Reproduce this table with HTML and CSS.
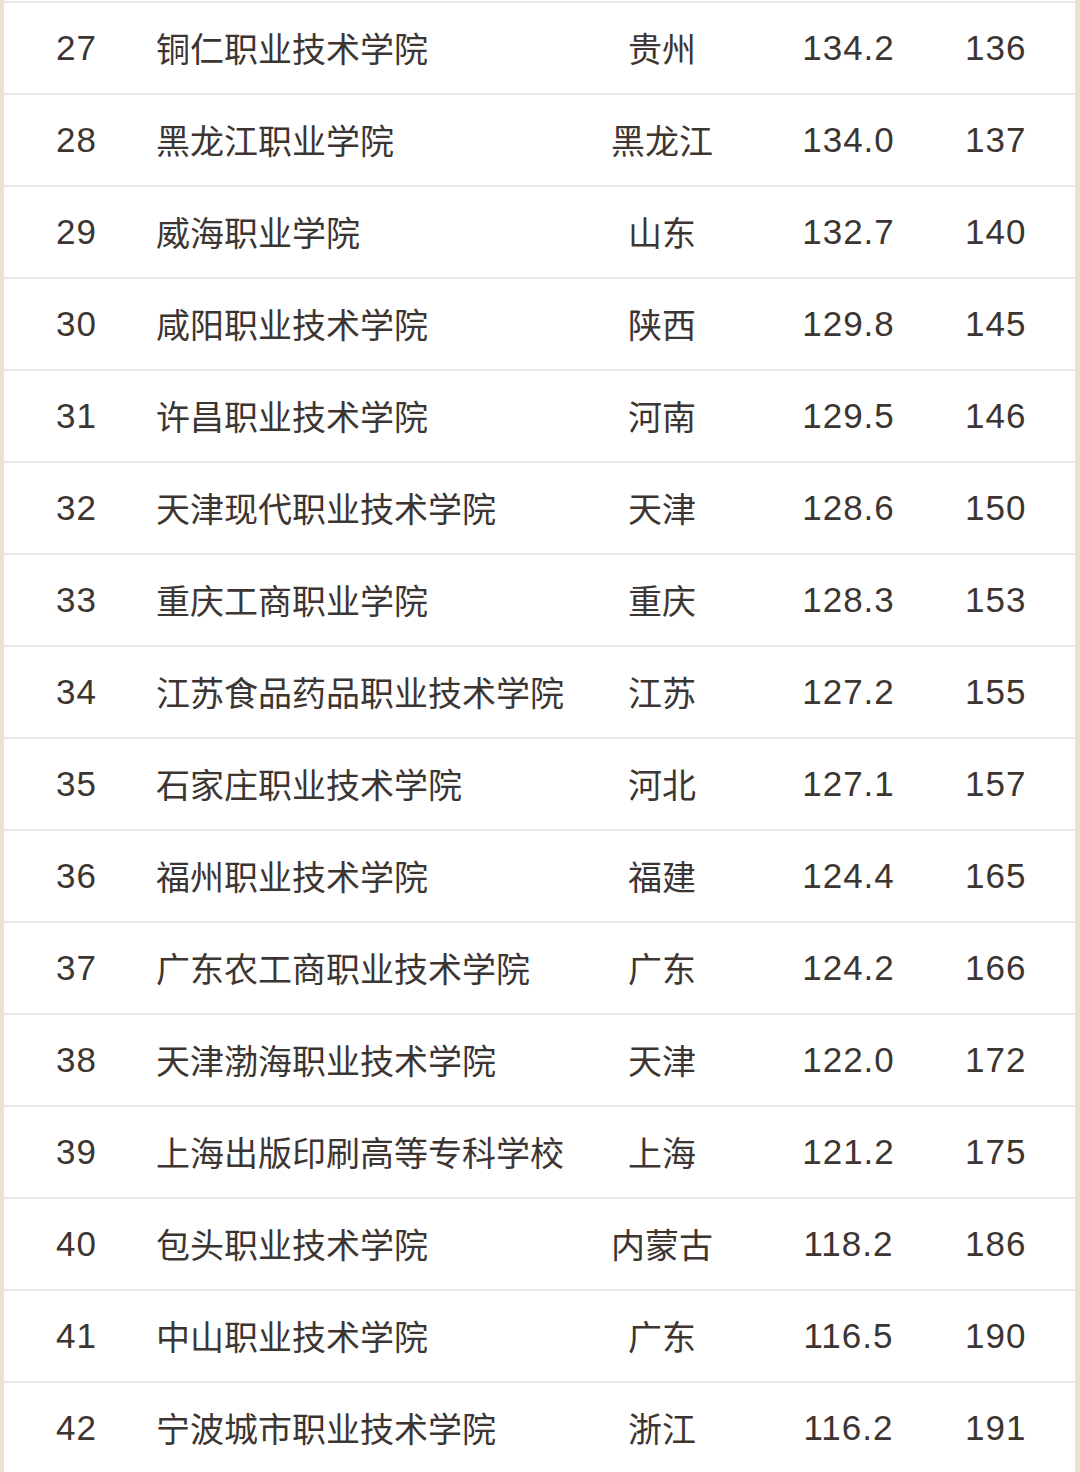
FILE: index.html
```html
<!DOCTYPE html>
<html lang="zh-CN">
<head>
<meta charset="utf-8">
<title>高职院校排名</title>
<link rel="stylesheet" href="styles.css">
</head>
<body>
<div class="table">
  <div class="row"><span class="rank">27</span><span class="name">铜仁职业技术学院</span><span class="prov">贵州</span><span class="score">134.2</span><span class="pos">136</span></div>
  <div class="row"><span class="rank">28</span><span class="name">黑龙江职业学院</span><span class="prov">黑龙江</span><span class="score">134.0</span><span class="pos">137</span></div>
  <div class="row"><span class="rank">29</span><span class="name">威海职业学院</span><span class="prov">山东</span><span class="score">132.7</span><span class="pos">140</span></div>
  <div class="row"><span class="rank">30</span><span class="name">咸阳职业技术学院</span><span class="prov">陕西</span><span class="score">129.8</span><span class="pos">145</span></div>
  <div class="row"><span class="rank">31</span><span class="name">许昌职业技术学院</span><span class="prov">河南</span><span class="score">129.5</span><span class="pos">146</span></div>
  <div class="row"><span class="rank">32</span><span class="name">天津现代职业技术学院</span><span class="prov">天津</span><span class="score">128.6</span><span class="pos">150</span></div>
  <div class="row"><span class="rank">33</span><span class="name">重庆工商职业学院</span><span class="prov">重庆</span><span class="score">128.3</span><span class="pos">153</span></div>
  <div class="row"><span class="rank">34</span><span class="name">江苏食品药品职业技术学院</span><span class="prov">江苏</span><span class="score">127.2</span><span class="pos">155</span></div>
  <div class="row"><span class="rank">35</span><span class="name">石家庄职业技术学院</span><span class="prov">河北</span><span class="score">127.1</span><span class="pos">157</span></div>
  <div class="row"><span class="rank">36</span><span class="name">福州职业技术学院</span><span class="prov">福建</span><span class="score">124.4</span><span class="pos">165</span></div>
  <div class="row"><span class="rank">37</span><span class="name">广东农工商职业技术学院</span><span class="prov">广东</span><span class="score">124.2</span><span class="pos">166</span></div>
  <div class="row"><span class="rank">38</span><span class="name">天津渤海职业技术学院</span><span class="prov">天津</span><span class="score">122.0</span><span class="pos">172</span></div>
  <div class="row"><span class="rank">39</span><span class="name">上海出版印刷高等专科学校</span><span class="prov">上海</span><span class="score">121.2</span><span class="pos">175</span></div>
  <div class="row"><span class="rank">40</span><span class="name">包头职业技术学院</span><span class="prov">内蒙古</span><span class="score">118.2</span><span class="pos">186</span></div>
  <div class="row"><span class="rank">41</span><span class="name">中山职业技术学院</span><span class="prov">广东</span><span class="score">116.5</span><span class="pos">190</span></div>
  <div class="row"><span class="rank">42</span><span class="name">宁波城市职业技术学院</span><span class="prov">浙江</span><span class="score">116.2</span><span class="pos">191</span></div>
</div>
</body>
</html>
```

FILE: styles.css
```css
html, body {
  margin: 0;
  padding: 0;
}
body {
  background: #e9e3cf;
  height: 1472px;
  overflow: hidden;
  font-family: "Liberation Sans", "Noto Sans CJK SC", sans-serif;
  color: #3d3531;
}
.table {
  margin: 0 5px 0 4px;
  padding-top: 1px;
  background: #ffffff;
}
.row {
  box-sizing: border-box;
  height: 92px;
  border-top: 2px solid #ebe6e3;
  display: grid;
  grid-template-columns: 144px 444px 140px 232px 62px 49px;
  align-items: center;
  font-size: 34px;
  line-height: 40px;
}
.rank, .prov, .score, .pos {
  text-align: center;
}
.rank, .score, .pos {
  font-size: 35px;
  letter-spacing: 1px;
  text-indent: 1px;
}
.name {
  padding-left: 8px;
  white-space: nowrap;
}
.prov, .name {
  font-family: "Noto Sans CJK SC", sans-serif;
}
```
